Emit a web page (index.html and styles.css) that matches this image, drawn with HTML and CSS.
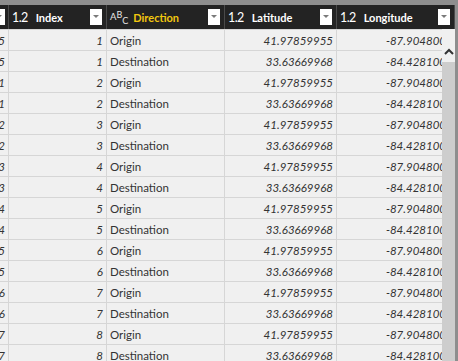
FILE: index.html
```html
<!DOCTYPE html>
<html lang="en">
<head>
    <meta charset="UTF-8">
    <title>Query Editor - Flights</title>
    <link rel="stylesheet" href="styles.css">
</head>
<body>
    <div class="frame">
        <header class="head">
            <div class="col cut"><span class="drop"></span></div>
            <div class="col"><span class="type">1.2</span><span class="name">Index</span><span class="drop"></span></div>
            <div class="col"><span class="abc">A<sup>B</sup><sub>C</sub></span><span class="name active">Direction</span><span class="drop"></span></div>
            <div class="col"><span class="type">1.2</span><span class="name">Latitude</span><span class="drop"></span></div>
            <div class="col"><span class="type">1.2</span><span class="name">Longitude</span><span class="drop"></span></div>
        </header>
        <main class="body">
            <section class="rows">
                <div class="row"><span class="cell num">5</span><span class="cell num">1</span><span class="cell">Origin</span><span class="cell num">41.97859955</span><span class="cell num">-87.904800</span></div>
                <div class="row"><span class="cell num">5</span><span class="cell num">1</span><span class="cell">Destination</span><span class="cell num">33.63669968</span><span class="cell num">-84.428100</span></div>
                <div class="row"><span class="cell num">1</span><span class="cell num">2</span><span class="cell">Origin</span><span class="cell num">41.97859955</span><span class="cell num">-87.904800</span></div>
                <div class="row"><span class="cell num">1</span><span class="cell num">2</span><span class="cell">Destination</span><span class="cell num">33.63669968</span><span class="cell num">-84.428100</span></div>
                <div class="row"><span class="cell num">2</span><span class="cell num">3</span><span class="cell">Origin</span><span class="cell num">41.97859955</span><span class="cell num">-87.904800</span></div>
                <div class="row"><span class="cell num">2</span><span class="cell num">3</span><span class="cell">Destination</span><span class="cell num">33.63669968</span><span class="cell num">-84.428100</span></div>
                <div class="row"><span class="cell num">3</span><span class="cell num">4</span><span class="cell">Origin</span><span class="cell num">41.97859955</span><span class="cell num">-87.904800</span></div>
                <div class="row"><span class="cell num">3</span><span class="cell num">4</span><span class="cell">Destination</span><span class="cell num">33.63669968</span><span class="cell num">-84.428100</span></div>
                <div class="row"><span class="cell num">4</span><span class="cell num">5</span><span class="cell">Origin</span><span class="cell num">41.97859955</span><span class="cell num">-87.904800</span></div>
                <div class="row"><span class="cell num">4</span><span class="cell num">5</span><span class="cell">Destination</span><span class="cell num">33.63669968</span><span class="cell num">-84.428100</span></div>
                <div class="row"><span class="cell num">5</span><span class="cell num">6</span><span class="cell">Origin</span><span class="cell num">41.97859955</span><span class="cell num">-87.904800</span></div>
                <div class="row"><span class="cell num">5</span><span class="cell num">6</span><span class="cell">Destination</span><span class="cell num">33.63669968</span><span class="cell num">-84.428100</span></div>
                <div class="row"><span class="cell num">6</span><span class="cell num">7</span><span class="cell">Origin</span><span class="cell num">41.97859955</span><span class="cell num">-87.904800</span></div>
                <div class="row"><span class="cell num">6</span><span class="cell num">7</span><span class="cell">Destination</span><span class="cell num">33.63669968</span><span class="cell num">-84.428100</span></div>
                <div class="row"><span class="cell num">7</span><span class="cell num">8</span><span class="cell">Origin</span><span class="cell num">41.97859955</span><span class="cell num">-87.904800</span></div>
                <div class="row"><span class="cell num">7</span><span class="cell num">8</span><span class="cell">Destination</span><span class="cell num">33.63669968</span><span class="cell num">-84.428100</span></div>
            </section>
            <aside class="scroll">
                <div class="up">
                    <svg width="10" height="7" viewBox="0 0 10 7"><path d="M1 6 L5 2 L9 6" fill="none" stroke="#333" stroke-width="2"/></svg>
                </div>
                <div class="thumb"></div>
            </aside>
        </main>
    </div>
</body>
</html>
```
FILE: styles.css
```css
html{
    box-sizing: border-box;
    font-family: "Lato", "Open Sans", sans-serif;
}
*,
*::after,
*::before{
    box-sizing: inherit;
}
body{
    margin: 0;
    background-color: #8e8e8e;
}
.frame{
    height: 361px;
    overflow: hidden;
    padding: 5px 3px 0 0;
    background-color: #8e8e8e;
}
.head{
    display: grid;
    grid-template-columns: 9px 98px 118px 112px 1fr;
    height: 24px;
    background-color: #232323;
    color: #fff;
}
.head .col{
    display: flex;
    align-items: center;
    overflow: hidden;
    padding: 0 4px 0 3px;
    border-right: 1px solid #4a4a4a;
}
.head .cut{
    justify-content: flex-end;
    padding: 0 3px 0 0;
}
.type{
    font-size: 12.5px;
    letter-spacing: -0.6px;
    margin-right: 8px;
}
.name{
    flex: 1;
    font-size: 11px;
    font-weight: 700;
    white-space: nowrap;
}
.name.active{
    color: #f2c80f;
}
.abc{
    display: inline-flex;
    align-items: center;
    margin-right: 5px;
    font-size: 9.5px;
    color: #e6e6e6;
    line-height: 1;
}
.abc sup,
.abc sub{
    font-size: 9px;
    position: relative;
    vertical-align: baseline;
}
.abc sup{
    top: -3px;
}
.abc sub{
    top: 3px;
}
.drop{
    flex-shrink: 0;
    display: flex;
    justify-content: center;
    width: 12px;
    height: 16px;
    padding-top: 6px;
    background-color: #fff;
}
.drop::after{
    content: "";
    width: 0;
    height: 0;
    border-left: 3px solid transparent;
    border-right: 3px solid transparent;
    border-top: 3px solid #7a7a7a;
}
.body{
    display: flex;
    height: 332px;
}
.rows{
    flex: 1;
    overflow: hidden;
    background-color: #f0f0f0;
}
.row{
    display: grid;
    grid-template-columns: 9px 98px 118px 112px 113px;
    height: 21px;
    border-top: 1px solid #d6d6d6;
    color: #333;
    font-size: 11.5px;
}
.cell{
    display: flex;
    align-items: center;
    overflow: hidden;
    white-space: nowrap;
    padding-left: 3px;
    border-right: 1px solid #d6d6d6;
}
.num{
    justify-content: flex-end;
    font-style: italic;
    padding: 0 3px 0 0;
}
.scroll{
    display: flex;
    flex-direction: column;
    width: 13px;
    background-color: #f0f0f0;
}
.up{
    display: flex;
    align-items: flex-end;
    justify-content: center;
    height: 33px;
    padding-bottom: 7px;
}
.up svg{
    display: block;
}
.thumb{
    flex: 1;
    background-color: #cdcdcd;
}
```
